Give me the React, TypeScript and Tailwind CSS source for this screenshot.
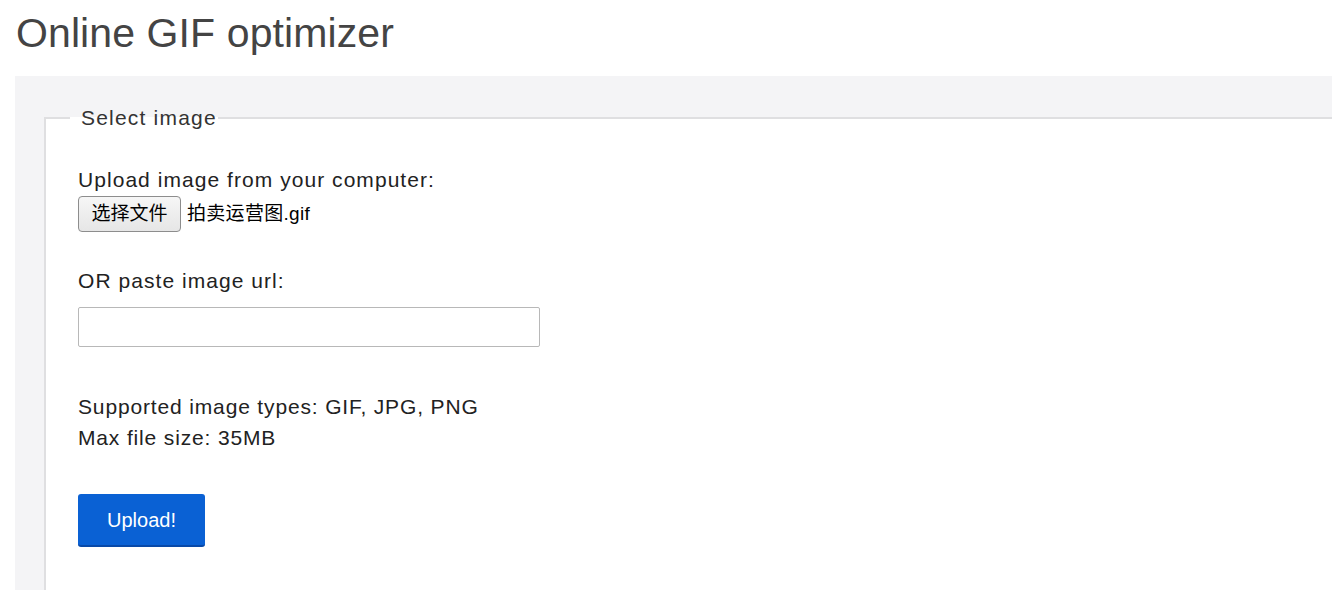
import React from "react";

export default function App() {
  return (
    <div
      className="min-h-[590px] bg-white text-[#222] overflow-hidden"
      style={{ fontFamily: '"Liberation Sans", "Noto Sans CJK SC", sans-serif' }}
    >
      <h1 className="pl-[16px] pt-[6px] text-[41px] leading-[54px] tracking-[0.1px] text-[#444] font-normal">
        Online GIF optimizer
      </h1>
      <div className="mt-[16px] ml-[15px] bg-[#f4f4f6] pt-[28px] pl-[29px]">
        <fieldset className="border-2 border-r-0 border-b-0 border-[#dfdfe1] bg-white pl-[32px] pb-[40px] min-h-[500px]">
          <legend className="ml-[-8px] pl-[11px] pr-[1px] text-[21px] leading-[28px] tracking-[1.2px] text-[#333]">
            Select image
          </legend>
          <div className="pt-[34px] text-[21px] leading-[28px] tracking-[1.05px]">
            Upload image from your computer:
          </div>
          <div className="mt-[2px] flex items-center gap-[6px]">
            <button className="h-[36px] w-[103px] rounded-[4px] border border-[#8d8d8d] bg-gradient-to-b from-[#f6f6f6] to-[#e6e6e6] text-[19px] text-black">
              选择文件
            </button>
            <span className="text-[19px] tracking-[0.3px] text-black">拍卖运营图.gif</span>
          </div>
          <div className="mt-[35px] text-[21px] leading-[28px] tracking-[1.05px]">
            OR paste image url:
          </div>
          <input
            type="text"
            className="mt-[12px] block h-[40px] w-[462px] rounded-[2px] border border-[#b8b8b8] bg-white outline-none"
          />
          <div className="mt-[44px] text-[21px] leading-[31px] tracking-[0.85px]">
            <div>Supported image types: GIF, JPG, PNG</div>
            <div>Max file size: 35MB</div>
          </div>
          <button className="mt-[41px] h-[53px] w-[127px] rounded-[3px] border-b-[2px] border-[#0849a8] bg-[#0a61d4] text-[20px] text-white">
            Upload!
          </button>
        </fieldset>
      </div>
    </div>
  );
}
